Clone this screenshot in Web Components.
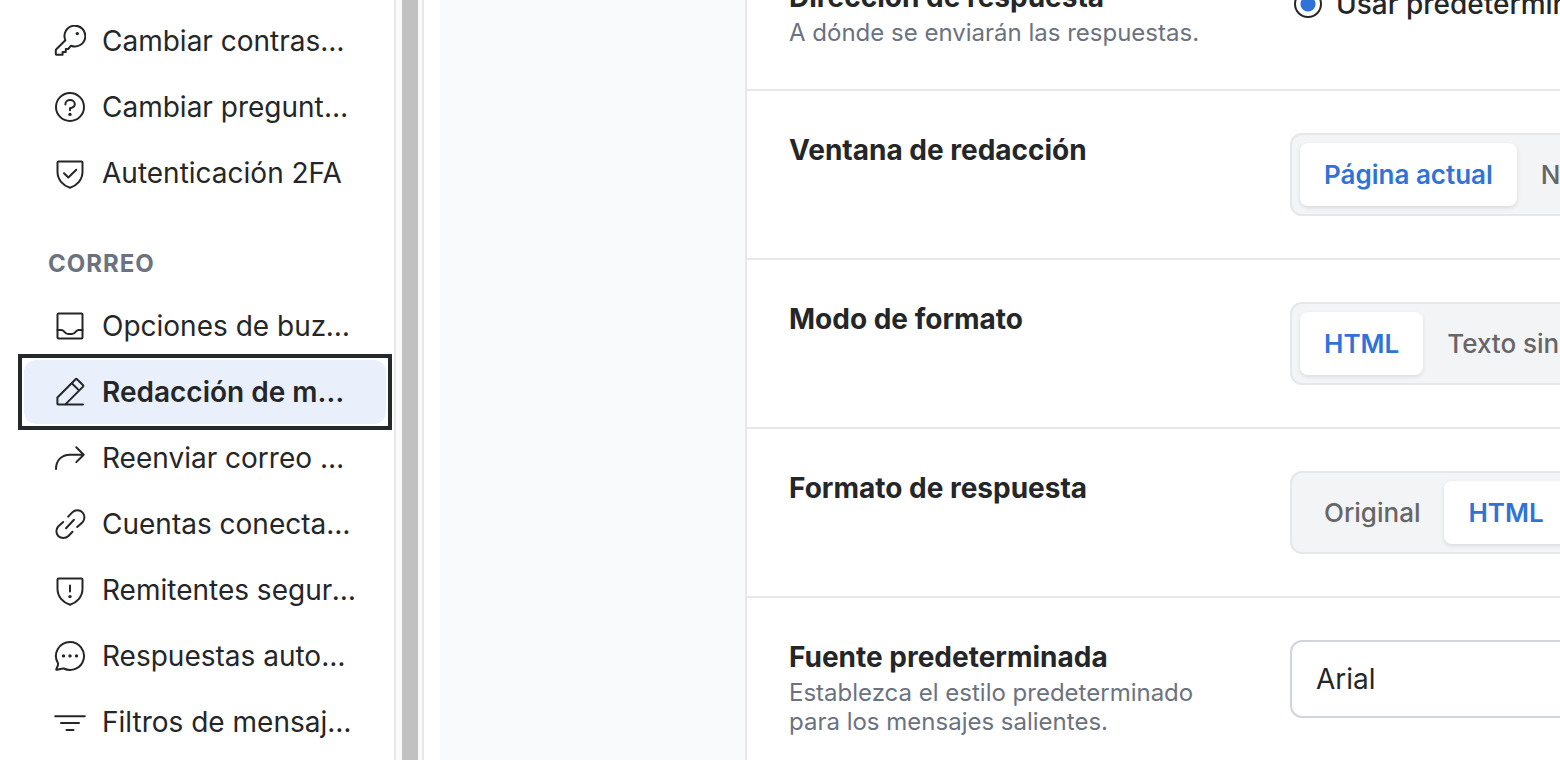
<!DOCTYPE html>
<html lang="es">
<head>
<meta charset="utf-8">
<title>Redacción de mensajes</title>
<style>
  html, body { margin: 0; height: 100%; overflow: hidden; }
  body { font: 400 28px/34px Inter, sans-serif; font-optical-sizing: none; color: #242628; background: #fff; }
</style>
</head>
<body>
<mail-settings>
  <settings-nav slot="nav">
    <nav-item icon="key">Cambiar contraseña</nav-item>
    <nav-item icon="question">Cambiar pregunta de seguridad</nav-item>
    <nav-item icon="shield-check">Autenticación 2FA</nav-item>
    <nav-heading>CORREO</nav-heading>
    <nav-item icon="inbox">Opciones de buzón</nav-item>
    <nav-item icon="pencil" current>Redacción de mensajes</nav-item>
    <nav-item icon="forward">Reenviar correo electrónico</nav-item>
    <nav-item icon="link">Cuentas conectadas</nav-item>
    <nav-item icon="shield-alert">Remitentes seguros y bloqueados</nav-item>
    <nav-item icon="chat">Respuestas automáticas</nav-item>
    <nav-item icon="filter">Filtros de mensajes</nav-item>
  </settings-nav>
  <settings-card>
    <setting-row label="Dirección de respuesta" hint="A dónde se enviarán las respuestas.">
      <radio-option name="reply" label="Usar predeterminado"></radio-option>
    </setting-row>
    <setting-row label="Ventana de redacción">
      <segmented-control label="Ventana de redacción" options="Página actual|Nueva ventana" selected="0"></segmented-control>
    </setting-row>
    <setting-row label="Modo de formato">
      <segmented-control label="Modo de formato" options="HTML|Texto sin formato" selected="0"></segmented-control>
    </setting-row>
    <setting-row label="Formato de respuesta">
      <segmented-control label="Formato de respuesta" options="Original|HTML|Texto sin formato" selected="1"></segmented-control>
    </setting-row>
    <setting-row label="Fuente predeterminada" hint="Establezca el estilo predeterminado para los mensajes salientes.">
      <select-field label="Fuente predeterminada" options="Arial|Georgia|Verdana"></select-field>
    </setting-row>
  </settings-card>
</mail-settings>

<script>
const SHIELD = '<path d="M4.5 4.5h23a1 1 0 0 1 1 1v9.3c0 7.8-5.3 13.6-12.5 15.9C8.8 28.4 3.5 22.6 3.5 14.8V5.5a1 1 0 0 1 1-1Z"/>';
const ICONS = {
  key: '<path d="M11.4 15.3 2.3 24.2a1.5 1.5 0 0 0-.5 1v3.9a.6.600 0 0 0 .6.600H8.600v-2.700h3.200v-3h2.400l2.800-3.300A10.400 10.400 0 1 0 11.400 15.300Z"/><circle class="dot" cx="23.3" cy="8.6" r="1.7"/>',
  question: '<circle cx="16" cy="16" r="14"/><path d="M11.400 13.600v-.3a4.700 4.200 0 0 1 9.400 0c0 2.300-1.900 3.400-4.800 4v1.900"/><circle class="dot" cx="16" cy="23.400" r="1.700"/>',
  'shield-check': SHIELD + '<path d="m10 16.300 4.300 4.200 8-7.800"/>',
  'shield-alert': SHIELD + '<path d="M16 11.500v6"/><circle class="dot" cx="16" cy="22.600" r="1.700"/>',
  inbox: '<rect x="3.500" y="3.500" width="25" height="25" rx="1"/><path d="M3.500 20h3.800c1.200 0 1.800.4 2.600 1.400 1.200 1.500 2.300 2.600 4.100 2.600h4c1.800 0 2.900-1.100 4.100-2.600.8-1 1.400-1.400 2.600-1.400h3.800"/>',
  pencil: '<path d="M29 28.600H4.200a.8.800 0 0 1-.8-.8v-6.300L21.600 3.200a1 1 0 0 1 1.400 0l6.100 6a1 1 0 0 1 0 1.400l-18 18M17.800 7.200l7.200 7.200"/>',
  forward: '<path d="M2 27C2 18.500 7.500 12.700 16 12.700h13.700M22.300 5.300l7.400 7.400-7.400 7.400"/>',
  link: '<path d="m14.100 8.600 4.200-4.200a7.200 7.200 0 0 1 10.200 0 7.200 7.200 0 0 1 0 9.800L23.200 19M9.200 14l-5 4.500a7.200 7.200 0 0 0 0 9.500 7.200 7.200 0 0 0 10.200 0l4.100-4.200M12 20.300l8-8.600"/>',
  chat: '<path d="M16 2a14 14 0 1 1-6.300 26.500C7.500 28 5 30.200 2.200 29.700 2.400 28 4.700 25.500 4 23.200A14 14 0 0 1 16 2Z"/><circle class="dot" cx="9.500" cy="15.900" r="1.700"/><circle class="dot" cx="16" cy="15.900" r="1.700"/><circle class="dot" cx="22.500" cy="15.900" r="1.700"/>',
  filter: '<path d="M1.200 10.300h29.600M7 17h18M12.500 24h7"/>'
};

function define(name, render) {
  customElements.define(name, class extends HTMLElement {
    connectedCallback() {
      if (this.shadowRoot) return;
      this.attachShadow({ mode: 'open' }).innerHTML = render(this);
    }
  });
}

define('mail-settings', () => `
  <style>
    :host { display: flex; height: 100vh; overflow: hidden; }
    .gutter { flex: none; box-sizing: border-box; width: 30px; padding: 0 4px 0 6px; background: #fafafa;
      border: solid #e8e8e8; border-width: 0 2px; }
    .thumb { height: 100%; background: #c1c1c1; }
    main { flex: 1; min-width: 0; margin-left: 16px; background: #f9fafc; overflow: hidden; }
  </style>
  <slot name="nav"></slot>
  <div class="gutter"><div class="thumb"></div></div>
  <main><slot></slot></main>`);

define('settings-nav', () => `
  <style>
    :host { display: block; flex: none; width: 394px; overflow: hidden; }
    nav { display: flex; flex-direction: column; gap: 2px; padding: 9px 8px 0 24px; }
  </style>
  <nav aria-label="Ajustes"><slot></slot></nav>`);

define('nav-heading', () => `
  <style>
    :host { display: block; }
    h2 { margin: 42px 24px 13px; font: 700 24px/30px Inter, sans-serif; letter-spacing: 1px; color: #6b7280; }
  </style>
  <h2><slot></slot></h2>`);

define('nav-item', el => `
  <style>
    :host { display: block; }
    :host([current]) { border-radius: 12px; background: #eaf0fb; }
    a { display: flex; align-items: center; gap: 16px; height: 64px; padding: 0 30px; color: inherit; text-decoration: none; }
    a[aria-current] { font-weight: 600; outline: 4px solid #24292b; outline-offset: 2px; }
    svg { flex: none; width: 32px; height: 32px; fill: none; stroke: currentColor; stroke-width: 2;
      stroke-linecap: round; stroke-linejoin: round; }
    .dot { fill: currentColor; stroke: none; }
    span { min-width: 0; overflow: hidden; white-space: nowrap; text-overflow: ellipsis; }
  </style>
  <a href="#${el.getAttribute('icon')}" ${el.hasAttribute('current') ? 'aria-current="page"' : ''}>
    <svg viewBox="0 0 32 32" aria-hidden="true">${ICONS[el.getAttribute('icon')]}</svg>
    <span><slot></slot></span>
  </a>`);

define('settings-card', () => `
  <style>
    /* The list rests part-way through its first row. */
    :host { display: block; margin: -62px 0 0 305px; background: #fff; border-left: 2px solid #e5e7eb; }
  </style>
  <slot></slot>`);

define('setting-row', el => `
  <style>
    :host { display: grid; grid-template-columns: 459px 1fr; gap: 42px; padding: 42px; border-bottom: 2px solid #e5e7eb; }
    h3 { margin: 0; font: 700 28px/34px Inter, sans-serif; }
    p { margin: 4px 0 0; font-size: 24px; line-height: 29px; color: #6b7280; }
    .control { min-width: 0; }
  </style>
  <div>
    <h3>${el.getAttribute('label')}</h3>
    ${el.hasAttribute('hint') ? `<p>${el.getAttribute('hint')}</p>` : ''}
  </div>
  <div class="control"><slot></slot></div>`);

define('radio-option', el => `
  <style>
    :host { display: block; }
    label { display: flex; align-items: center; gap: 14px; height: 48px; padding-left: 4px; font-weight: 500; white-space: nowrap; }
    input { appearance: none; flex: none; box-sizing: border-box; width: 28px; height: 28px; margin: 0;
      border: 2px solid #242628; border-radius: 50%; background: radial-gradient(circle, #2f73d9 7px, #fff 8px); }
  </style>
  <label><input type="radio" name="${el.getAttribute('name')}" checked>${el.getAttribute('label')}</label>`);

define('segmented-control', el => `
  <style>
    :host { display: block; }
    fieldset { display: inline-flex; vertical-align: top; min-width: 0; margin: 0; padding: 8px; border: 2px solid #e5e7eb;
      border-radius: 12px; background: #f3f4f6; }
    label { padding: 0 24px; border-radius: 8px; font-size: 26px; font-weight: 500; line-height: 63px; color: #666;
      white-space: nowrap; }
    label:has(:checked) { background: #fff; color: #2f73d9; font-weight: 600; box-shadow: 0 2px 4px rgba(0, 0, 0, .1); }
    input { position: absolute; appearance: none; margin: 0; opacity: 0; }
  </style>
  <fieldset aria-label="${el.getAttribute('label')}">
    ${el.getAttribute('options').split('|').map((text, i) =>
      `<label><input type="radio" name="choice" ${i === +el.getAttribute('selected') ? 'checked' : ''}>${text}</label>`).join('')}
  </fieldset>`);

define('select-field', el => `
  <style>
    :host { display: block; }
    select { appearance: none; display: block; box-sizing: border-box; width: 100%; min-width: 480px; height: 78px;
      padding: 0 24px; border: 2px solid #d1d5db; border-radius: 12px; background: #fff; color: inherit; font: inherit; }
  </style>
  <select aria-label="${el.getAttribute('label')}">
    ${el.getAttribute('options').split('|').map(text => `<option>${text}</option>`).join('')}
  </select>`);
</script>
</body>
</html>
